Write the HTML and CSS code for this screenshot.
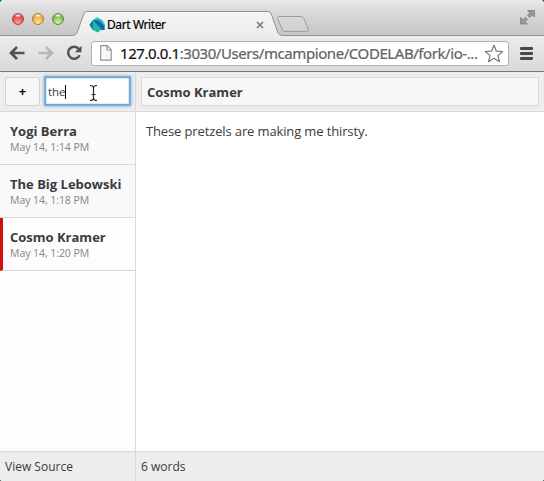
FILE: index.html
```html
<!DOCTYPE html>
<html lang="en">
<head>
<meta charset="utf-8">
<title>Dart Writer</title>
<link rel="stylesheet" href="styles.css">
</head>
<body>
<div class="window">
  <header class="tabstrip">
    <svg class="tab-shape" width="544" height="36" viewBox="0 0 544 36">
      <defs>
        <linearGradient id="tab" x1="0" y1="0" x2="0" y2="1"><stop offset="0" stop-color="#f5f5f5"/><stop offset="1" stop-color="#ececec"/></linearGradient>
        <linearGradient id="newtab" x1="0" y1="0" x2="0" y2="1"><stop offset="0" stop-color="#d9d9d9"/><stop offset="1" stop-color="#cfcfcf"/></linearGradient>
      </defs>
      <path d="M0 35.5H72C75.500 35.500 76.500 34 77.500 31.500L83 16C84 13 85 11.500 88 11.500H267C270 11.500 271 13 272 16L277.500 31.500C278.500 34 279.500 35.500 283 35.500H544V37H0Z" fill="url(#tab)" stroke="#909090"/>
      <path d="M87 12.500H268" fill="none" stroke="#fff" opacity=".6"/>
      <path d="M278.500 16.500H300C302.500 16.500 303.500 17.500 304.300 19.500L308 29C308.800 31 308.300 31.500 306.500 31.500H286C283.500 31.500 282.500 30.500 281.700 28.500L277.500 18.500C277 17 277.300 16.500 278.500 16.500Z" fill="url(#newtab)" stroke="#9b9b9b"/>
    </svg>
    <div class="lights"><i class="light red"></i><i class="light amber"></i><i class="light green"></i></div>
    <div class="tab">
      <svg width="16" height="16" viewBox="0 0 16 16">
        <path d="M4 3 8 .5 13 3l2.500 4v6H12L8.500 15.500 4 13 .5 8Z" fill="#20b9a0"/>
        <path d="M4 3h6l5.500 5.500V13H13Z" fill="#0869b5"/>
        <path d="M4 3v10l-3.500-5Z" fill="#0878b9"/>
        <path d="M4 3 8 .5 13 3l2.500 4v2L10 3.500Z" fill="#2bc7ab"/>
      </svg>
      <span class="tab-title">Dart Writer</span>
      <svg class="tab-close" width="8" height="8" viewBox="0 0 8 8"><path d="m1 1 6 6M7 1 1 7" stroke="#7b7b7b" stroke-width="1.600"/></svg>
    </div>
    <svg class="fullscreen" width="15" height="15" viewBox="0 0 15 15" fill="#989898" stroke="#7e7e7e" stroke-width=".8"><path d="M7.500 .5h7V7L12.300 5 9.500 7.500 7.500 5.500 9.800 2.800Z"/><path d="M.5 7.500v6.500H7.500L5.200 11.800 7.500 9.300 5.500 7.300 3 9.800Z"/></svg>
  </header>
  <nav class="toolbar">
    <svg class="back" width="16" height="14" viewBox="0 0 16 14" fill="none" stroke="#505050" stroke-width="2.600"><path d="M8 1 2 7l6 6M2 7h13.500"/></svg>
    <svg class="forward" width="16" height="14" viewBox="0 0 16 14" fill="none" stroke="#b6b6b6" stroke-width="2.600"><path d="m8 1 6 6-6 6M14 7H.5"/></svg>
    <svg class="reload" width="16" height="16" viewBox="0 0 16 16"><path d="M12.800 3.900A6 6 0 1 0 13.600 10.200" fill="none" stroke="#535353" stroke-width="2.500"/><path d="M15.500.7v6.500H8.800Z" fill="#535353"/></svg>
    <div class="omnibox">
      <svg width="12" height="16" viewBox="0 0 12 16"><path d="M.7.7h6.500l4 4v10.500H.7ZM7 .7V5h4.200" fill="#f7f7f7" stroke="#939393" stroke-width="1.200"/></svg>
      <span class="url"><b>127.0.0.1</b>:3030/Users/mcampione/CODELAB/fork/io-...</span>
      <svg class="star" width="20" height="19" viewBox="0 0 20 19"><path d="M10 1.200 12.400 7.100 18.700 7.500 13.900 11.600 15.500 17.700 10 14.300 4.500 17.700 6.100 11.600 1.300 7.500 7.600 7.100Z" fill="#fff" stroke="#777" stroke-width="1.200" stroke-linejoin="round"/></svg>
    </div>
    <div class="menu"><i></i><i></i><i></i></div>
  </nav>
  <main class="app">
    <aside class="sidebar">
      <div class="bar">
        <button class="add">+</button>
        <div class="search">the<i class="caret"></i>
          <svg class="ibeam" width="9" height="18" viewBox="0 0 9 18" fill="none" stroke="#222" stroke-width="1.200"><path d="M1 1.500C3 1.500 4.500 2 4.500 4v10c0 2-1.500 2.500-3.500 2.500M8 1.500C6 1.500 4.500 2 4.500 4v10c0 2 1.500 2.500 3.500 2.500M2.500 10.500h4"/></svg>
        </div>
      </div>
      <ul class="docs">
        <li><strong>Yogi Berra</strong><time>May 14, 1:14 PM</time></li>
        <li><strong>The Big Lebowski</strong><time>May 14, 1:18 PM</time></li>
        <li class="active"><strong>Cosmo Kramer</strong><time>May 14, 1:20 PM</time></li>
      </ul>
      <footer class="status">View Source</footer>
    </aside>
    <section class="editor">
      <div class="bar"><div class="title">Cosmo Kramer</div></div>
      <p class="content">These pretzels are making me thirsty.</p>
      <footer class="status">6 words</footer>
    </section>
  </main>
</div>
</body>
</html>
```

FILE: styles.css
```css
* { box-sizing: border-box; }
svg { flex: none; }
body { margin: 0; background: #23505d; font-family: "Open Sans", "Noto Sans", sans-serif; color: #3b3b3b; }
.window { height: 481px; display: flex; flex-direction: column; overflow: hidden; border-radius: 4px 4px 3px 3px; background: #ededed; }
.tabstrip { position: relative; height: 36px; flex: none; display: flex; background: linear-gradient(#ebebeb, #dadada 30%, #c5c5c5); }
.tab-shape { position: absolute; left: 0; top: 0; }
.lights { position: relative; display: flex; gap: 8px; padding: 13px 0 0 12px; width: 89px; }
.light { width: 12px; height: 12px; border-radius: 50%; border: 1px solid; }
.red { background: radial-gradient(ellipse 4px 2px at 50% 15%, #fff, transparent), radial-gradient(circle at 50% 85%, #ff9d98, #e2444b 65%); border-color: #a94749; }
.amber { background: radial-gradient(ellipse 4px 2px at 50% 15%, #fff, transparent), radial-gradient(circle at 50% 85%, #ffe995, #eca83d 65%); border-color: #ae7b3b; }
.green { background: radial-gradient(ellipse 4px 2px at 50% 15%, #fff, transparent), radial-gradient(circle at 50% 85%, #d3f7a5, #79b84f 65%); border-color: #5d8c45; }
.tab { position: relative; display: flex; align-items: center; width: 175px; height: 25px; margin-top: 12px; }
.tab-title { margin-left: 2px; font: 12px/16px "Noto Sans", sans-serif; letter-spacing: -.4px; color: #000; -webkit-text-stroke: .2px #000; white-space: nowrap; }
.tab-close { margin-left: auto; }
.fullscreen { position: relative; margin: 10px 9px 0 auto; }
.toolbar { height: 36px; flex: none; display: flex; align-items: center; padding: 0 11px 1px 9px; background: linear-gradient(#ececec, #d9d9d9); border-bottom: 1px solid #777; }
.forward { margin-left: 13px; }
.reload { margin-left: 12px; }
.omnibox { display: flex; align-items: center; width: 418px; height: 25px; margin: 0 0 0 9px; padding: 0 4px 0 8px; background: #fff; border: 1px solid #b2b2b2; border-radius: 3px; }
.url { margin-left: 8px; font: 15px/22px "Noto Sans", sans-serif; letter-spacing: -.43px; color: #626262; -webkit-text-stroke: .2px; white-space: nowrap; }
.url b { font-weight: 400; color: #111; }
.star { margin-left: auto; }
.menu { display: flex; flex-direction: column; gap: 2px; margin-left: auto; }
.menu i { width: 13px; height: 3px; border-radius: 1px; background: #484848; }
.app { flex: 1; display: flex; min-height: 0; }
.sidebar { width: 136px; display: flex; flex-direction: column; background: #fdfdfd; border-right: 1px solid #d9d9d9; }
.editor { flex: 1; display: flex; flex-direction: column; background: #fff; }
.bar { display: flex; height: 40px; flex: none; padding: 5px 5px 5px; background: #ededed; border-bottom: 1px solid #d9d9d9; }
.add { width: 35px; height: 29px; padding: 0 0 1px; background: #f7f7f7; border: 1px solid #d2d2d2; border-radius: 2px; font: 700 13px "Open Sans", sans-serif; color: #000; }
.search { position: relative; display: flex; align-items: center; width: 85px; height: 28px; margin-left: 5px; padding: 1px 0 0 2px; background: #fff; border: 1px solid #6da5d7; box-shadow: 0 0 0 1px #83b2dc, 0 0 3px 1px #6fa6d8, inset 0 0 2px #8bb9e2; font-size: 11.500px; letter-spacing: -.1px; }
.caret { width: 1px; height: 14px; background: #000; }
.ibeam { position: absolute; left: 43px; top: 6px; }
.docs { flex: 1; margin: 0; padding: 0; list-style: none; }
.docs li { height: 53px; padding: 11px 0 0 10px; border-bottom: 1px solid #d9d9d9; background: #f9f9f9; white-space: nowrap; }
.docs .active { padding-left: 7px; border-left: 3px solid #d31010; background: #fdfdfd; }
.docs strong { display: block; font-size: 13px; line-height: 17px; }
.docs time { display: block; font-size: 10.500px; line-height: 14px; letter-spacing: -.06px; color: #858585; }
.title { flex: 1; height: 29px; padding-left: 5px; border: 1px solid #d9d9d9; background: #f7f7f7; font-weight: 700; font-size: 13px; line-height: 28px; }
.content { flex: 1; margin: 0; padding: 9px 10px; font-size: 13px; line-height: 20px; letter-spacing: -.13px; }
.status { height: 30px; flex: none; padding-left: 5px; background: #ededed; border-top: 1px solid #d9d9d9; font-size: 12px; line-height: 30px; }
```
